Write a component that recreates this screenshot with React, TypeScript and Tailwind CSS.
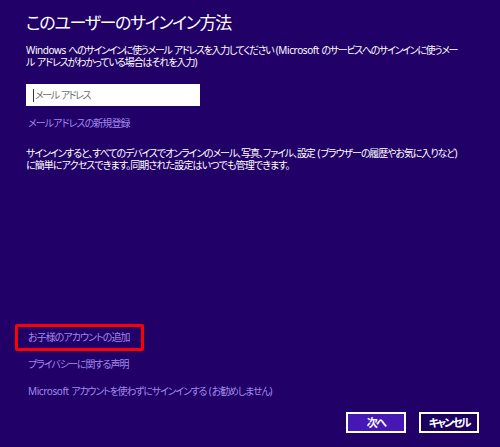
function L({ children }: { children: React.ReactNode }) {
  // latin words keep near-normal spacing, kana get squeezed
  return <span className="tracking-[-0.4px]">{children}</span>;
}

// a single line stretched to the width it has in the screenshot
const fit = "block whitespace-nowrap text-justify [text-align-last:justify]";

export default function App() {
  const font = "[font-family:'Noto_Sans','Noto_Sans_CJK_JP',sans-serif] [font-feature-settings:'palt']";
  const body = "text-[10px] tracking-[-1.5px]";
  return (
    <div lang="ja" className={`${font} relative flex h-[447px] w-[500px] flex-col overflow-hidden bg-[#210068] pl-[26px] pr-[21px] text-white`}>
      <h1 className={`${fit} mt-[11px] h-[24px] w-[203px] text-[17px] leading-[24px] tracking-[-3.2px]`}>
        このユーザーのサインイン方法
      </h1>

      <div className={`mt-[9px] ${body} leading-[12px]`}>
        <span className={`${fit} w-[431px]`}>
          <L>Windows </L>へのサインインに使うメール<L> </L>アドレスを入力してください<L> (Microsoft </L>のサービスへのサインインに使うメー
        </span>
        <span className={`${fit} w-[171px]`}>
          ル<L> </L>アドレスがわかっている場合はそれを入力<L>)</L>
        </span>
      </div>

      <div className="mt-[16px] flex h-[22px] w-[174px] items-center bg-white pl-[7px]">
        <span className="h-[13px] w-px bg-[#333]" />
        <span className={`${fit} ml-[1px] w-[55px] ${body} text-[#707070]`}>
          メール<L> </L>アドレス
        </span>
      </div>

      <a className={`${fit} mt-[9px] h-[16px] w-[103px] pl-[2px] ${body} leading-[16px] text-[#a08ae8]`}>
        メールアドレスの新規登録
      </a>

      <div className={`mt-[16px] ${body} leading-[12px]`}>
        <span className={`${fit} w-[431px]`}>
          サインインすると、すべてのデバイスでオンラインのメール、写真、ファイル、設定<L> (</L>ブラウザーの履歴やお気に入りなど<L>)</L>
        </span>
        <span className={`${fit} w-[263px]`}>
          に簡単にアクセスできます。同期された設定はいつでも管理できます。
        </span>
      </div>

      <div className={`mt-auto flex flex-col ${body} text-[#a08ae8]`}>
        <div className="relative flex h-[27px] items-center pl-[2px]">
          <a className={`${fit} w-[101px]`}>お子様のアカウントの追加</a>
          <div className="absolute top-0 left-[-11px] h-[27px] w-[129px] rounded-[2px] border-[3px] border-[#ff0000]" />
        </div>
        <div className="flex h-[27px] items-center pl-[2px]">
          <a className={`${fit} w-[100px]`}>プライバシーに関する声明</a>
        </div>
        <div className="flex h-[27px] items-center pl-[2px]">
          <a className={`${fit} w-[244px]`}>
            <L>Microsoft </L>アカウントを使わずにサインインする<L> (</L>お勧めしません<L>)</L>
          </a>
        </div>
      </div>

      <div className="mt-[7px] mb-[14px] flex justify-end gap-[13px]">
        <button className="h-[21px] w-[60px] border-2 border-white bg-[#4617b4] text-[11px] font-bold leading-none tracking-[-1.5px] text-white">
          次へ
        </button>
        <button className="h-[21px] w-[60px] border-2 border-white bg-[#1c0060] text-[11px] font-bold leading-none tracking-[-2px] text-white">
          キャンセル
        </button>
      </div>
    </div>
  );
}
